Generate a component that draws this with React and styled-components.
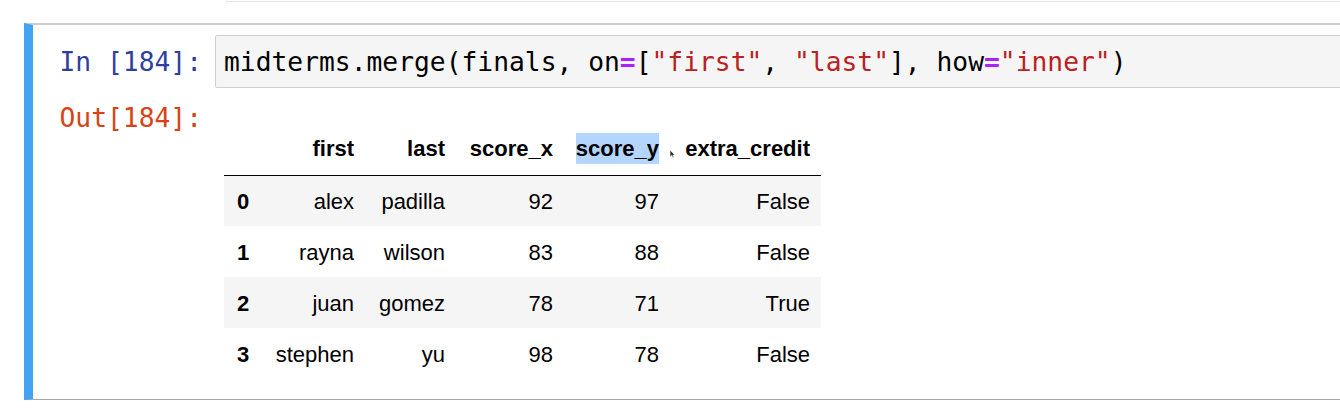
import React from "react";
import styled, { createGlobalStyle } from "styled-components";

const GlobalStyle = createGlobalStyle`
html, body {
  margin: 0;
  padding: 0;
  background: #fff;
  overflow: hidden;
}
body {
  font-family: "Liberation Sans", Arial, sans-serif;
}
`;

const Page = styled.div`
width: 1340px;
height: 414px;
overflow: hidden;
`;

const PrevInput = styled.div`
margin-left: 225px;
height: 1px;
border-bottom: 1px solid #e4e4e4;
border-left: 1px solid #eeeeee;
border-bottom-left-radius: 2px;
`;

const Cell = styled.div`
margin: 21px 0 0 24px;
width: 1360px;
border-left: 9px solid #45a4f2;
border-top: 2px solid #cdcdcd;
border-bottom: 1px solid #a8a8a8;
padding: 10px 0 20px;
`;

const Row = styled.div`
display: flex;
align-items: flex-start;
`;

const Prompt = styled.div`
width: 182px;
box-sizing: border-box;
padding-right: 13px;
text-align: right;
font-family: "DejaVu Sans Mono", "Liberation Mono", monospace;
font-size: 26.3px;
line-height: 30px;
color: ${(p) => (p.out ? "#d84315" : "#303f9f")};
padding-top: ${(p) => (p.out ? "1px" : "12px")};
`;

const InputBox = styled.div`
flex: 1;
background: #f5f5f5;
border: 1px solid #cfcfcf;
border-radius: 2px;
height: 53px;
box-sizing: border-box;
padding: 11px 0 0 8px;
font-family: "DejaVu Sans Mono", "Liberation Mono", monospace;
font-size: 26.3px;
line-height: 30px;
color: #000;
white-space: pre;
`;

const Op = styled.span`
color: #aa22ff;
font-weight: bold;
`;

const Str = styled.span`
color: #ba2121;
`;

const OutputRow = styled(Row)`
margin-top: 14px;
`;

const OutputArea = styled.div`
padding: 19px 0 0 9px;
`;

const Table = styled.table`
border-collapse: collapse;
border-spacing: 0;
table-layout: fixed;
font-size: 22px;
color: #000;
`;

const Th = styled.th`
width: ${(p) => p.w}px;
height: 54px;
box-sizing: border-box;
padding: 2px 11px 0;
text-align: right;
font-weight: bold;
vertical-align: middle;
border-bottom: 1px solid #000;
position: relative;
`;

const Tr = styled.tr`
background: ${(p) => (p.shade ? "#f5f5f5" : "#fff")};
`;

const IndexCell = styled.th`
height: 51px;
box-sizing: border-box;
padding: 2px 0 0 13px;
text-align: left;
font-weight: bold;
vertical-align: middle;
`;

const Td = styled.td`
height: 51px;
box-sizing: border-box;
padding: 2px 11px 0;
text-align: right;
vertical-align: middle;
`;

const Selected = styled.span`
background: #b4d5fd;
padding: 3px 0;
`;

const Cursor = styled.svg`
position: absolute;
right: -6px;
top: 28px;
`;

const columns = [
  { name: "", w: 38 },
  { name: "first", w: 103 },
  { name: "last", w: 91 },
  { name: "score_x", w: 108 },
  { name: "score_y", w: 106, selected: true },
  { name: "extra_credit", w: 151 },
];

const rows = [
  ["0", "alex", "padilla", "92", "97", "False"],
  ["1", "rayna", "wilson", "83", "88", "False"],
  ["2", "juan", "gomez", "78", "71", "True"],
  ["3", "stephen", "yu", "98", "78", "False"],
];

const App = () => {
  return (
    <Page>
      <GlobalStyle />
      <PrevInput />
      <Cell>
        <Row>
          <Prompt>In [184]:</Prompt>
          <InputBox>
            midterms.merge(finals, on<Op>=</Op>[<Str>"first"</Str>, <Str>"last"</Str>], how<Op>=</Op><Str>"inner"</Str>)
          </InputBox>
        </Row>
        <OutputRow>
          <Prompt out>Out[184]:</Prompt>
          <OutputArea>
            <Table>
              <thead>
                <tr>
                  {columns.map((c) => (
                    <Th key={c.name} w={c.w}>
                      {c.selected ? <Selected>{c.name}</Selected> : c.name}
                      {c.selected && (
                        <Cursor width="7" height="10" viewBox="0 0 7 10">
                          <path d="M1 1 L1 8 L2.8 6.4 L4 9 L5 8.5 L3.9 6 L6 6 Z" fill="#333" stroke="#fff" strokeWidth="0.6" />
                        </Cursor>
                      )}
                    </Th>
                  ))}
                </tr>
              </thead>
              <tbody>
                {rows.map((r, i) => (
                  <Tr key={r[0]} shade={i % 2 === 0}>
                    <IndexCell>{r[0]}</IndexCell>
                    {r.slice(1).map((v, j) => (
                      <Td key={j}>{v}</Td>
                    ))}
                  </Tr>
                ))}
              </tbody>
            </Table>
          </OutputArea>
        </OutputRow>
      </Cell>
    </Page>
  );
};

export default App;
